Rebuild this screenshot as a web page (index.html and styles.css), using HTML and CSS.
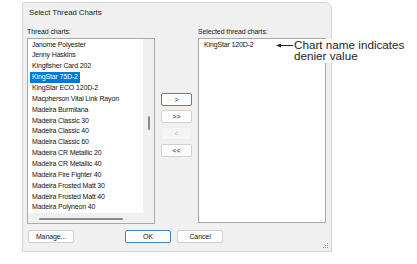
FILE: index.html
```html
<!DOCTYPE html>
<html>
<head>
<meta charset="utf-8">
<link rel="stylesheet" href="styles.css">
</head>
<body>
<div class="dialog">
  <div class="title">Select Thread Charts</div>
  <div class="labels">
    <div class="lab lab-left">Thread charts:</div>
    <div class="lab">Selected thread charts:</div>
  </div>
  <div class="main">
    <div class="listbox">
      <div class="content">
        <div class="item">Janome Polyester</div>
        <div class="item">Jenny Haskins</div>
        <div class="item">Kingfisher Card 202</div>
        <div class="item"><span class="sel">KingStar 75D-2</span></div>
        <div class="item">KingStar ECO 120D-2</div>
        <div class="item">Macpherson Vital Link Rayon</div>
        <div class="item">Madeira Burmilana</div>
        <div class="item">Madeira Classic 30</div>
        <div class="item">Madeira Classic 40</div>
        <div class="item">Madeira Classic 60</div>
        <div class="item">Madeira CR Metallic 20</div>
        <div class="item">Madeira CR Metallic 40</div>
        <div class="item">Madeira Fire Fighter 40</div>
        <div class="item">Madeira Frosted Matt 30</div>
        <div class="item">Madeira Frosted Matt 40</div>
        <div class="item">Madeira Polyneon 40</div>
      </div>
      <div class="vscroll"><div class="vthumb"></div></div>
      <div class="hscroll"><div class="hthumb"></div></div>
      <div class="corner"></div>
    </div>
    <div class="movers">
      <div class="btn small default">&gt;</div>
      <div class="btn small">&gt;&gt;</div>
      <div class="btn small disabled">&lt;</div>
      <div class="btn small">&lt;&lt;</div>
    </div>
    <div class="listbox right">
      <div class="item r">KingStar 120D-2</div>
    </div>
  </div>
  <div class="footer">
    <div class="btn wide">Manage...</div>
    <div class="spacer"></div>
    <div class="btn wide default">OK</div>
    <div class="btn wide">Cancel</div>
  </div>
  <svg class="grip" width="6" height="6" viewBox="0 0 6 6"><rect x="4" y="0" width="1" height="1" fill="#9a9a9a"/><rect x="2" y="2" width="1" height="1" fill="#9a9a9a"/><rect x="4" y="2" width="1" height="1" fill="#9a9a9a"/><rect x="0" y="4" width="1" height="1" fill="#9a9a9a"/><rect x="2" y="4" width="1" height="1" fill="#9a9a9a"/><rect x="4" y="4" width="1" height="1" fill="#9a9a9a"/></svg>
</div>
<div class="note">
  <svg class="arrow" width="17" height="5" viewBox="0 0 17 5"><path d="M0 2.5 L5 0.5 L5 4.5 Z" fill="#222"/><rect x="4" y="2" width="13" height="1" fill="#222"/></svg>
  <div class="note-text"><div>Chart name indicates</div><div>denier value</div></div>
</div>
</body>
</html>
```
FILE: styles.css
```css
html, body { margin: 0; padding: 0; background: #fff; }
body { width: 417px; height: 264px; position: relative; overflow: hidden;
  font-family: "Liberation Sans", Arial, sans-serif; }
.dialog { position: relative; margin: 2px 0 0 22px; width: 310px; height: 250px; box-sizing: border-box;
  background: #f0f0f0; border: 1px solid #d4d4d4; border-radius: 0 7px 0 0;
  padding: 0 0 0 4px; display: flex; flex-direction: column; color: #1a1a1a; }
.title { height: 23px; line-height: 20px; font-size: 7.8px; padding-left: 2px; color: #222; letter-spacing: -0.05px; }
.labels { height: 12px; display: flex; font-size: 7px; line-height: 11px; letter-spacing: -0.1px; }
.lab-left { width: 171px; }
.main { height: 186px; display: flex; }
.listbox { width: 128px; height: 186px; box-sizing: border-box; border: 1px solid #a8a8a8; background: #fff;
  display: grid; grid-template-columns: 115px 11px; grid-template-rows: 174px 10px; }
.listbox.right { display: block; height: 185px; }
.content { padding-top: 0.6px; overflow: hidden; }
.item { font-size: 7px; letter-spacing: -0.15px; line-height: 10.87px; height: 10.87px; white-space: nowrap; color: #111; }
.content .item { padding-left: 4px; }
.item.r { padding-left: 5px; line-height: 12px; }
.sel { display: inline-block; background: #0078d7; color: #fff; padding: 0 2px; margin-left: -2px; line-height: 10.87px; }
.vscroll { background: #f0f0f0; display: flex; flex-direction: column; align-items: center; }
.vthumb { width: 2px; height: 14px; margin-top: 77px; margin-left: 1px; background: #8a8a8a; border-radius: 1px; }
.hscroll { background: #f0f0f0; display: flex; align-items: center; }
.hthumb { height: 2px; width: 84px; margin-left: 11px; margin-top: 1px; background: #8a8a8a; border-radius: 1px; }
.corner { background: #f0f0f0; }
.movers { width: 43px; display: flex; flex-direction: column; align-items: center; gap: 4px; padding-top: 55px; box-sizing: border-box; }
.btn { box-sizing: border-box; background: #fdfdfd; border: 1px solid #d0d0d0; border-radius: 2px;
  font-size: 7px; color: #222; display: flex; align-items: center; justify-content: center; letter-spacing: -0.1px; }
.btn.small { width: 31px; height: 13px; }
.btn.default { border-color: #3d86d0; }
.btn.disabled { background: #f5f5f5; border-color: #ececec; color: #b5b5b5; }
.footer { display: flex; margin-top: 6px; padding-left: 1px; gap: 6px; }
.btn.wide { width: 46px; height: 13px; }
.spacer { width: 39px; }
.grip { position: absolute; right: 2px; bottom: 2px; }
.note { position: absolute; left: 275px; top: 39px; width: 138px; height: 24px; background: #fff; display: flex; align-items: flex-start; }
.arrow { margin-top: 4px; margin-left: 1px; }
.note-text { font-size: 11.7px; line-height: 11.5px; color: #1e1e1e; margin-left: 1px; margin-top: -0.5px; }
```
